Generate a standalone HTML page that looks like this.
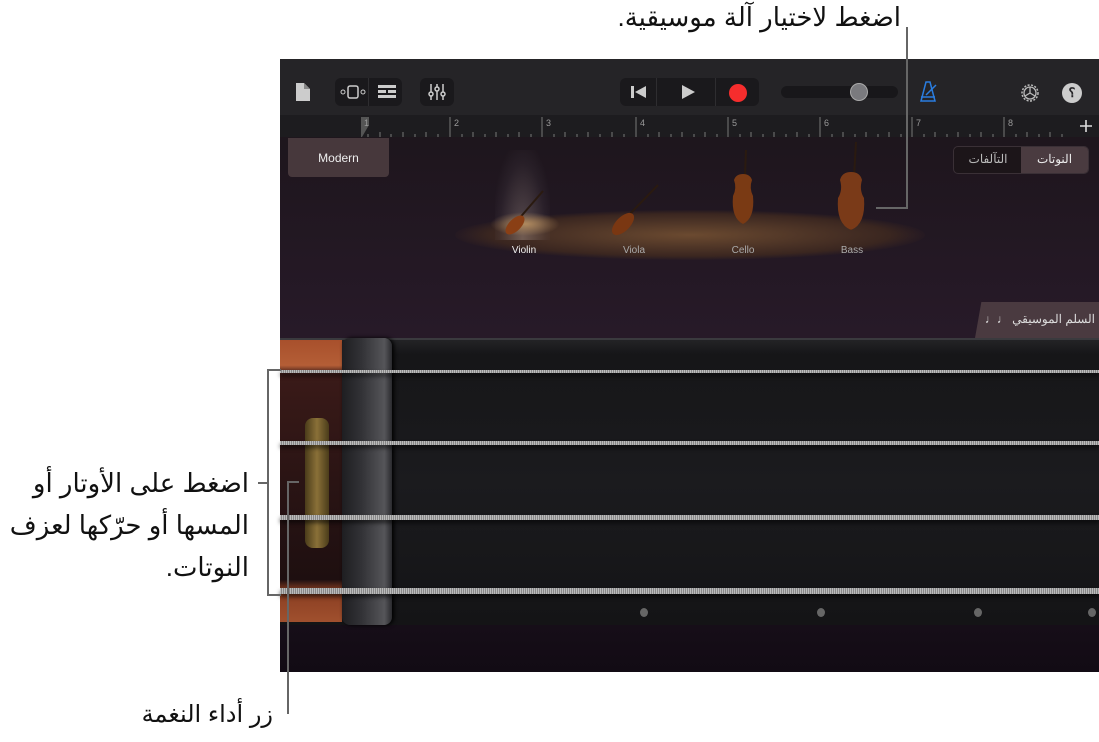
<!DOCTYPE html>
<html><head><meta charset="utf-8"><style>
*{margin:0;padding:0;box-sizing:border-box}
body{width:1099px;height:742px;background:#fff;position:relative;overflow:hidden;font-family:"Liberation Sans","Noto Sans CJK SC",sans-serif}
.a{position:absolute}
.ann{position:absolute;direction:rtl;font-family:"Liberation Sans","Noto Sans CJK SC","DejaVu Sans",sans-serif;font-size:26px;color:#111;white-space:nowrap}
.ln{position:absolute;background:#666}
.btn{position:absolute;background:#1a191c;border-radius:6px}
.string{position:absolute;left:280px;width:819px;background:repeating-linear-gradient(90deg,#bbb 0 1px,#888 1px 2px);box-shadow:0 3px 4px rgba(0,0,0,.6)}
.dot{position:absolute;width:8px;height:9px;border-radius:50%;background:#666}
.lab{position:absolute;color:#aaa;font-size:10px;width:60px;text-align:center}
</style></head><body>
<div class="a" style="left:280px;top:59px;width:819px;height:613px;background:linear-gradient(#1a1418,#2a1b2c 55%,#120b14)"></div>
<!-- toolbar -->
<div class="a" style="left:280px;top:59px;width:819px;height:56px;background:#252427"></div>
<svg class="a" style="left:295px;top:82px" width="16" height="20"><path d="M1 1H9L15 7V19H1Z" fill="#ccc"/><path d="M9 1V7H15" fill="#888"/></svg>
<div class="btn" style="left:335px;top:78px;width:67px;height:28px"></div>
<div class="a" style="left:368px;top:78px;width:1px;height:28px;background:#2e2d30"></div>
<svg class="a" style="left:339px;top:84px" width="28" height="16"><rect x="9" y="2" width="10" height="12" rx="2" fill="none" stroke="#ccc" stroke-width="1.5"/><circle cx="4" cy="8" r="2" fill="none" stroke="#ccc"/><circle cx="24" cy="8" r="2" fill="none" stroke="#ccc"/></svg>
<svg class="a" style="left:377px;top:84px" width="20" height="16"><rect x="1" y="1" width="18" height="3" fill="#ccc"/><rect x="1" y="6" width="8" height="3" fill="#ccc"/><rect x="11" y="6" width="8" height="3" fill="#ccc"/><rect x="1" y="11" width="18" height="3" fill="#ccc"/></svg>
<div class="btn" style="left:420px;top:78px;width:34px;height:28px"></div>
<svg class="a" style="left:427px;top:83px" width="20" height="18"><g stroke="#ccc" stroke-width="1.5" fill="#1a191c"><line x1="4" y1="1" x2="4" y2="17"/><line x1="10" y1="1" x2="10" y2="17"/><line x1="16" y1="1" x2="16" y2="17"/><circle cx="4" cy="11" r="2"/><circle cx="10" cy="6" r="2"/><circle cx="16" cy="11" r="2"/></g></svg>
<div class="btn" style="left:620px;top:78px;width:139px;height:28px"></div>
<div class="a" style="left:656px;top:78px;width:1px;height:28px;background:#2e2d30"></div>
<div class="a" style="left:715px;top:78px;width:1px;height:28px;background:#2e2d30"></div>
<svg class="a" style="left:629px;top:84px" width="20" height="16"><rect x="2" y="2" width="3" height="12" fill="#ccc"/><path d="M17 2V14L6 8Z" fill="#ccc"/></svg>
<svg class="a" style="left:680px;top:84px" width="16" height="16"><path d="M2 1V15L15 8Z" fill="#ccc"/></svg>
<div class="a" style="left:729px;top:84px;width:18px;height:18px;border-radius:50%;background:#f62d2d"></div>
<div class="a" style="left:781px;top:86px;width:117px;height:12px;border-radius:6px;background:#18171a"></div>
<div class="a" style="left:850px;top:83px;width:18px;height:18px;border-radius:50%;background:#7a7a7e;border:1px solid #aaa"></div>
<svg class="a" style="left:918px;top:81px" width="20" height="22"><path d="M8 1H12L17 20H3Z" fill="none" stroke="#2a7de0" stroke-width="1.5"/><line x1="3" y1="16" x2="17" y2="16" stroke="#2a7de0" stroke-width="1.5"/><line x1="8" y1="14" x2="18" y2="4" stroke="#2a7de0" stroke-width="1.5"/></svg>
<svg class="a" style="left:1019px;top:82px" width="22" height="22"><circle cx="11" cy="11" r="8" fill="none" stroke="#bbb" stroke-width="1.5" stroke-dasharray="2 1.5"/><circle cx="11" cy="11" r="6" fill="none" stroke="#bbb" stroke-width="1.3"/><path d="M11 5V11L6 14M11 11L16 14" stroke="#bbb" stroke-width="1.3" fill="none"/></svg>
<div class="a" style="left:1062px;top:83px;width:20px;height:20px;border-radius:50%;background:#ccc;color:#252427;font-size:13px;font-weight:bold;text-align:center;line-height:20px">؟</div>
<!-- ruler -->
<div class="a" style="left:280px;top:115px;width:819px;height:22px;background:#1d1c1f"></div>
<svg class="a" style="left:280px;top:115px" width="819" height="22">
<path d="M81 2H89V10L82 22H81Z" fill="#555"/>
<g stroke="#777" stroke-width="1">
<line x1="170" y1="2" x2="170" y2="22"/><line x1="262" y1="2" x2="262" y2="22"/><line x1="356" y1="2" x2="356" y2="22"/><line x1="448" y1="2" x2="448" y2="22"/><line x1="540" y1="2" x2="540" y2="22"/><line x1="632" y1="2" x2="632" y2="22"/><line x1="724" y1="2" x2="724" y2="22"/>
</g>
<g fill="#999" font-size="9" font-family="Liberation Sans"><text x="84" y="11">1</text><text x="174" y="11">2</text><text x="266" y="11">3</text><text x="360" y="11">4</text><text x="452" y="11">5</text><text x="544" y="11">6</text><text x="636" y="11">7</text><text x="728" y="11">8</text></g>
<path d="M88 19V22M100 17V22M111 19V22M123 17V22M135 19V22M146 17V22M158 19V22M182 19V22M193 17V22M205 19V22M216 17V22M228 19V22M239 17V22M251 19V22M274 19V22M285 17V22M297 19V22M308 17V22M320 19V22M332 17V22M344 19V22M368 19V22M379 17V22M391 19V22M402 17V22M414 19V22M425 17V22M437 19V22M460 19V22M471 17V22M483 19V22M494 17V22M506 19V22M517 17V22M529 19V22M552 19V22M563 17V22M575 19V22M586 17V22M598 19V22M609 17V22M621 19V22M644 19V22M655 17V22M667 19V22M678 17V22M690 19V22M701 17V22M713 19V22M736 19V22M747 17V22M759 19V22M770 17V22M782 19V22" stroke="#777"/>
<path d="M800 11H812M806 5V17" stroke="#ddd" stroke-width="1.6"/>
</svg>
<!-- modern -->
<div class="a" style="left:288px;top:138px;width:101px;height:39px;background:#47383c;border-radius:0 0 4px 4px;color:#eee;font-size:12px;text-align:center;line-height:40px">Modern</div>
<!-- segmented -->
<div class="a" style="left:953px;top:146px;width:136px;height:28px;border-radius:5px;background:#1c1519;border:1px solid #3a3036"></div>
<div class="a" style="left:1021px;top:147px;width:67px;height:26px;border-radius:0 4px 4px 0;background:#4a3b40"></div>
<div class="a" style="left:955px;top:152px;width:66px;text-align:center;color:#bbb;font-size:12px;direction:rtl">التآلفات</div>
<div class="a" style="left:1021px;top:152px;width:67px;text-align:center;color:#eee;font-size:12px;direction:rtl">النوتات</div>
<!-- stage -->
<div class="a" style="left:455px;top:210px;width:470px;height:50px;border-radius:50%;background:radial-gradient(ellipse at center,#6b4a30,#3a2620 60%,rgba(40,25,30,0) 72%)"></div>
<div class="a" style="left:495px;top:150px;width:55px;height:90px;background:radial-gradient(ellipse at 50% 100%,rgba(200,180,170,.35),rgba(120,110,120,.1) 60%,rgba(0,0,0,0) 80%)"></div>
<div class="a" style="left:490px;top:212px;width:70px;height:24px;border-radius:50%;background:radial-gradient(#b08a5e,rgba(140,100,60,0) 70%)"></div>
<svg class="a" style="left:495px;top:185px" width="60" height="55"><path d="M48 6L22 36" stroke="#2a1a10" stroke-width="2"/><ellipse cx="20" cy="40" rx="12" ry="6" transform="rotate(-45 20 40)" fill="#8a3f15"/></svg>
<svg class="a" style="left:600px;top:180px" width="65" height="60"><path d="M58 5L26 38" stroke="#2a1a10" stroke-width="2"/><ellipse cx="23" cy="44" rx="14" ry="7" transform="rotate(-45 23 44)" fill="#7a3712"/></svg>
<svg class="a" style="left:725px;top:148px" width="36" height="80"><path d="M21 2L18 75" stroke="#2a1a10" stroke-width="2"/><path d="M9 32Q11 26 18 26Q25 26 27 32Q24 40 28 48Q30 70 18 76Q6 70 8 48Q12 40 9 32Z" fill="#7a3a14"/></svg>
<svg class="a" style="left:830px;top:140px" width="42" height="95"><path d="M26 2L21 90" stroke="#2a1a10" stroke-width="2"/><path d="M10 40Q12 32 21 32Q30 32 32 40Q29 50 34 58Q36 84 21 90Q6 84 8 58Q13 50 10 40Z" fill="#7a3a18"/></svg>
<div class="lab" style="left:494px;top:245px;color:#eee">Violin</div>
<div class="lab" style="left:604px;top:245px">Viola</div>
<div class="lab" style="left:713px;top:245px">Cello</div>
<div class="lab" style="left:822px;top:245px">Bass</div>
<!-- scale button -->
<div class="a" style="left:975px;top:302px;width:124px;height:36px;background:#4a3a40;transform:skewX(-10deg);transform-origin:bottom left"></div>
<div class="a" style="left:985px;top:312px;width:110px;color:#ddd;font-size:12px;direction:rtl;text-align:right;white-space:nowrap">السلم الموسيقي ♩♩</div>
<!-- fretboard -->
<div class="a" style="left:280px;top:338px;width:819px;height:287px;background:linear-gradient(#232326,#161618 5%,#1b1b1e 50%,#141416);border-top:2px solid #3a3a3e"></div>
<div class="a" style="left:280px;top:340px;width:62px;height:282px;background:linear-gradient(#a8502c 0,#b45e36 9%,#3a1a18 12%,#2a1414 50%,#1e0f10 85%,#8a3e22 89%,#a0502e 100%)"></div>
<div class="a" style="left:342px;top:338px;width:50px;height:287px;border-radius:8px;background:linear-gradient(90deg,#1e1e21,#333337 40%,#555559 85%,#2a2a2e);box-shadow:2px 0 4px #000"></div>
<div class="a" style="left:305px;top:418px;width:24px;height:130px;border-radius:8px;background:linear-gradient(90deg,#4a3c1a,#8a7038 50%,#4a3c1a)"></div>
<div class="string" style="top:370px;height:3px"></div>
<div class="string" style="top:441px;height:4px"></div>
<div class="string" style="top:515px;height:5px"></div>
<div class="string" style="top:588px;height:6px"></div>
<div class="dot" style="left:640px;top:608px"></div>
<div class="dot" style="left:817px;top:608px"></div>
<div class="dot" style="left:974px;top:608px"></div>
<div class="dot" style="left:1088px;top:608px"></div>
<!-- annotations -->
<div class="ann" style="right:198px;top:2px">اضغط لاختيار آلة موسيقية.</div>
<div class="ln" style="left:906px;top:27px;width:2px;height:182px"></div>
<div class="ln" style="left:876px;top:207px;width:32px;height:2px"></div>
<div class="ann" style="right:850px;top:462px;line-height:42px;text-align:right">اضغط على الأوتار أو<br>المسها أو حرّكها لعزف<br>النوتات.</div>
<div class="ln" style="left:258px;top:482px;width:11px;height:2px"></div>
<div class="ln" style="left:267px;top:369px;width:2px;height:227px"></div>
<div class="ln" style="left:267px;top:369px;width:14px;height:2px"></div>
<div class="ln" style="left:267px;top:594px;width:14px;height:2px"></div>
<div class="ann" style="right:826px;top:700px;font-size:24px">زر أداء النغمة</div>
<div class="ln" style="left:287px;top:481px;width:2px;height:233px"></div>
<div class="ln" style="left:287px;top:481px;width:12px;height:2px"></div>
</body></html>
